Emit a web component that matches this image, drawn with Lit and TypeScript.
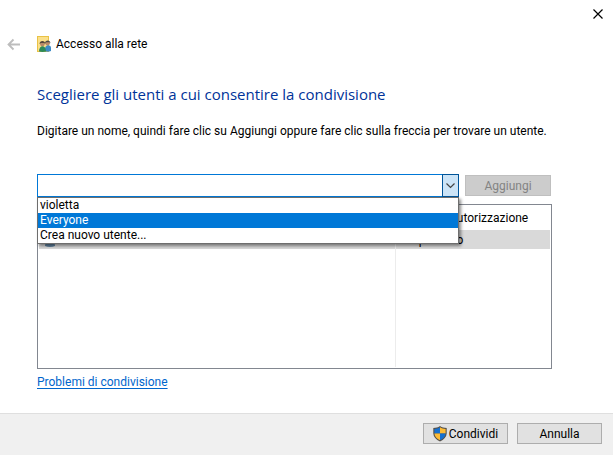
import { LitElement, css, html, svg } from "lit";
import { customElement, state } from "lit/decorators.js";
import { classMap } from "lit/directives/class-map.js";

const backArrow = svg`<path d="M13 6.5H1.5M6.5 1.5l-5 5 5 5" fill="none" stroke="#bdbdbd" stroke-width="1.8"/>`;

const cross = svg`<path d="M.5.5l9 9M9.5.5l-9 9" fill="none" stroke="#000" stroke-width="1.2"/>`;

const chevron = svg`<path d="M.5.5l4 4 4-4" fill="none" stroke="#444" stroke-width="1.2"/>`;

const sharedUsers = svg`
  <path d="M0 0h12v16H0z" fill="#e9c246"/>
  <path d="M1 1h10v14H1z" fill="#fbe08a"/>
  <circle cx="10.6" cy="7.2" r="2.3" fill="#b98a68"/>
  <path d="M8 7.200c0-3.600 5.400-3.600 5.400 0l-1.200-1H9.400z" fill="#4d4a45"/>
  <path d="M7.500 15c0-7 6.500-7 6.500-3v3c-2 .9-4.500.9-6.500 0z" fill="#3c8ac6"/>
  <circle cx="5.400" cy="8" r="2.400" fill="#b98a68"/>
  <path d="M2.500 8c0-3.900 5.800-3.900 5.800 0L7 7H4z" fill="#55483b"/>
  <path d="M2 15.600c0-7 7-7 7 0-2 .5-5 .5-7 0z" fill="#2c8a58"/>`;

const shield = svg`
  <path d="M7 0C5 1.400 3 1.900.3 2v5.500C.5 11 3 13.500 7 15.500c4-2 6.500-4.500 6.700-8V2C11 1.900 9 1.400 7 0z" fill="#56514a"/>
  <path d="M7 1.300C5.300 2.400 3.500 2.900 1.400 3v4.500H7z" fill="#1570d0"/>
  <path d="M7 1.300c1.700 1.100 3.500 1.600 5.600 1.700v4.500H7z" fill="#fdbb35"/>
  <path d="M1.400 7.500H7v6.800c-3.200-1.600-5.400-3.800-5.600-6.800z" fill="#fdbb35"/>
  <path d="M12.600 7.500H7v6.800c3.200-1.600 5.400-3.800 5.600-6.800z" fill="#1570d0"/>`;

const person = svg`
  <circle cx="6" cy="4" r="3" fill="#b98a68"/>
  <path d="M1 13c0-7 10-7 10 0-3 1.300-7 1.300-10 0z" fill="#5d7f9c"/>`;

@customElement("app-root")
export class AppRoot extends LitElement {
  @state() private open = true;
  @state() private active = "Everyone";
  @state() private value = "";

  private options = ["violetta", "Everyone", "Crea nuovo utente..."];

  static styles = css`
    :host {
      display: flex;
      flex-direction: column;
      min-height: 100vh;
      background: #fff;
      color: #000;
      font: 12px/16px Roboto, "Open Sans", sans-serif;
    }
    * { box-sizing: border-box; }
    svg { display: block; flex: none; }
    button, input { font: inherit; color: inherit; margin: 0; padding: 0; }
    .plain { border: 0; background: none; }
    .titlebar { display: flex; justify-content: flex-end; align-items: flex-start; padding: 9px 10px; }
    .header { display: flex; align-items: center; padding: 8px 7px 0; }
    .header .badge { margin-left: 17px; }
    .header .title { margin-left: 5px; }
    .content { flex: 1; padding: 30px 61px 0 37px; }
    h1 { margin: 0; font: 400 15px/24px "Open Sans", "Noto Sans", sans-serif; color: #003399; white-space: nowrap; }
    label { display: block; margin-top: 17px; white-space: nowrap; }
    .picker { display: flex; align-items: center; gap: 6px; margin-top: 35px; padding-right: 1px; }
    .combo { position: relative; display: flex; flex: 1; height: 23px; }
    .combo input {
      flex: 1;
      min-width: 0;
      padding: 0 3px;
      border: 1px solid #0078d7;
      border-right: 0;
      border-radius: 0;
      outline: 0;
      background: #fff;
    }
    .drop {
      display: grid;
      place-items: center;
      width: 17px;
      border: 1px solid #005499;
      background: #cce4f7;
    }
    .options {
      position: absolute;
      z-index: 1;
      top: 100%;
      left: 0;
      right: 0;
      margin: 0;
      padding: 0;
      list-style: none;
      border: 1px solid #6e6e6e;
      background: #fff;
      box-shadow: 2px 2px 3px rgba(0, 0, 0, 0.45);
      line-height: 15px;
    }
    .options li { padding: 0 2px; }
    .options .active { background: #0078d7; color: #fff; }
    .button {
      display: flex;
      align-items: center;
      justify-content: center;
      gap: 2px;
      width: 86px;
      height: 21px;
      border: 1px solid #adadad;
      background: #e1e1e1;
    }
    .footer .button { width: 85px; }
    .button:disabled { border-color: #bfbfbf; background: #ccc; color: #838383; }
    .users { margin-top: 7px; height: 165px; border: 1px solid #828790; padding: 1px; }
    table { width: 100%; height: 100%; border-collapse: collapse; table-layout: fixed; }
    th, td { padding: 0 5px; text-align: left; font-weight: 400; white-space: nowrap; }
    th { height: 24px; }
    td { height: 19px; }
    .level { width: 155px; border-left: 1px solid #ececec; }
    .selected { background: #d9d9d9; }
    .rest td { height: auto; }
    .help { display: inline-block; margin-top: 5px; color: #0066cc; text-underline-offset: 2px; }
    .footer {
      display: flex;
      justify-content: flex-end;
      gap: 9px;
      padding: 9px 11px 11px;
      border-top: 1px solid #dfdfdf;
      background: #f0f0f0;
    }
  `;

  private choose(option: string) {
    this.value = option;
    this.active = option;
    this.open = false;
  }

  render() {
    return html`
      <div class="titlebar">
        <button class="plain" aria-label="Chiudi"><svg width="10" height="10">${cross}</svg></button>
      </div>
      <header class="header">
        <button class="plain" aria-label="Indietro" disabled><svg width="13" height="13">${backArrow}</svg></button>
        <svg class="badge" width="14" height="16">${sharedUsers}</svg>
        <span class="title">Accesso alla rete</span>
      </header>
      <main class="content">
        <h1>Scegliere gli utenti a cui consentire la condivisione</h1>
        <label for="user">Digitare un nome, quindi fare clic su Aggiungi oppure fare clic sulla freccia per trovare un utente.</label>
        <div class="picker">
          <div class="combo">
            <input id="user" type="text" role="combobox" aria-controls="options" aria-expanded=${this.open}
              .value=${this.value} @input=${(e: Event) => (this.value = (e.target as HTMLInputElement).value)}>
            <button class="drop" aria-label="Mostra utenti" @click=${() => (this.open = !this.open)}>
              <svg width="9" height="6">${chevron}</svg>
            </button>
            <ul class="options" id="options" role="listbox" ?hidden=${!this.open}>
              ${this.options.map((o) => html`<li role="option" aria-selected=${o === this.active}
                class=${classMap({ active: o === this.active })}
                @mouseenter=${() => (this.active = o)} @click=${() => this.choose(o)}>${o}</li>`)}
            </ul>
          </div>
          <button class="button" ?disabled=${!this.value}>Aggiungi</button>
        </div>
        <div class="users">
          <table>
            <thead><tr><th></th><th class="level">Livello di autorizzazione</th></tr></thead>
            <tbody>
              <tr class="selected">
                <td><svg width="12" height="14">${person}</svg></td>
                <td class="level">Proprietario</td>
              </tr>
              <tr class="rest"><td></td><td class="level"></td></tr>
            </tbody>
          </table>
        </div>
        <a class="help" href="#problemi">Problemi di condivisione</a>
      </main>
      <footer class="footer">
        <button class="button"><svg width="14" height="16">${shield}</svg>Condividi</button>
        <button class="button">Annulla</button>
      </footer>
    `;
  }
}
